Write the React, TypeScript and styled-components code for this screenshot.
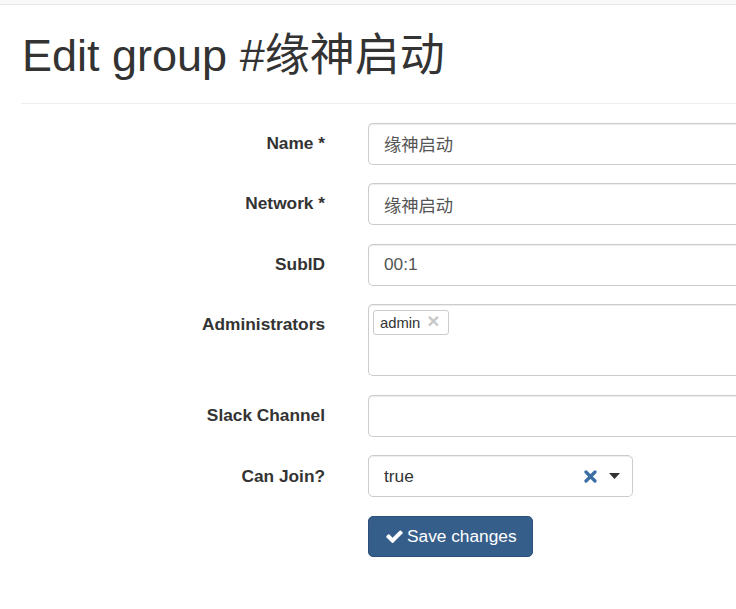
import React from "react";
import styled, { createGlobalStyle } from "styled-components";

const Global = createGlobalStyle`
  html, body { margin: 0; padding: 0; background: #fff; overflow: hidden; }
  body {
    font-family: "Liberation Sans", Arial, "Noto Sans CJK SC", sans-serif;
    font-size: 17.3px;
    color: #333;
  }
  * { box-sizing: border-box; }
`;

const TopBar = styled.div`
  height: 5px;
  background: #f8f8f8;
  border-bottom: 1px solid #e7e7e7;
`;

const Container = styled.div`
  width: 100%;
  padding-left: 21px;
`;

const PageHeader = styled.div`
  margin-top: 26px;
  padding-bottom: 10px;
  border-bottom: 1px solid #eee;
  margin-bottom: 19px;
`;

const Title = styled.h1`
  margin: 0 0 12px 0;
  padding-left: 1px;
  font-size: 45px;
  font-weight: 400;
  line-height: 1.1;
  color: #333;
  font-family: "Liberation Sans", Arial, "Noto Sans CJK SC", sans-serif;
`;

const Form = styled.form`
  display: grid;
  grid-template-columns: 304px 1fr;
  column-gap: 43px;
  row-gap: 18.6px;
  align-items: start;
`;

const Label = styled.label`
  text-align: right;
  font-weight: 700;
  padding-top: 8.2px;
  line-height: 24.7px;
  font-size: 17.3px;
  color: #333;
`;

const Input = styled.div<{ $width?: number }>`
  height: 42px;
  width: ${(p) => (p.$width ? `${p.$width}px` : "100%")};
  border: 1px solid #ccc;
  border-right: ${(p) => (p.$width ? "1px solid #ccc" : "none")};
  border-radius: ${(p) => (p.$width ? "5px" : "5px 0 0 5px")};
  box-shadow: inset 0 1px 1px rgba(0, 0, 0, 0.075);
  background: #fff;
  padding: 0 15px;
  display: flex;
  align-items: center;
  font-size: 17.3px;
  color: #555;
  font-family: "Liberation Sans", Arial, "Noto Sans CJK SC", sans-serif;
`;

const TagBox = styled.div`
  height: 72px;
  border: 1px solid #ccc;
  border-right: none;
  border-radius: 5px 0 0 5px;
  box-shadow: inset 0 1px 1px rgba(0, 0, 0, 0.075);
  padding: 5px 4px;
  display: flex;
  align-items: flex-start;
`;

const Tag = styled.span`
  display: inline-flex;
  align-items: center;
  height: 25px;
  border: 1px solid #ccc;
  border-radius: 3px;
  padding: 0 8px 0 6px;
  font-size: 14.8px;
  color: #333;
  gap: 7px;
`;

const TagX = styled.span`
  color: #c8c8c8;
  font-size: 21px;
  font-weight: 700;
  line-height: 1;
  margin-top: -4px;
`;

const SelectValue = styled.span`
  flex: 1;
  color: #333;
`;

const Controls = styled.span`
  display: flex;
  align-items: center;
  gap: 12px;
  margin-right: -3px;
`;

const Button = styled.button`
  display: inline-flex;
  align-items: center;
  gap: 4px;
  height: 40.5px;
  padding: 0 15px 0 17px;
  background: #365e8b;
  border: 1px solid #2e5078;
  border-radius: 5px;
  color: #fff;
  font-size: 17.3px;
  font-family: "Liberation Sans", Arial, sans-serif;
`;

const Spacer = styled.div``;

const Check = () => (
  <svg width="17" height="15" viewBox="100 330 1590 1150" fill="#fff">
    <path d="M1671 566q0 40-28 68l-724 724-136 136q-28 28-68 28t-68-28l-136-136-362-362q-28-28-28-68t28-68l136-136q28-28 68-28t68 28l294 295 656-657q28-28 68-28t68 28l136 136q28 28 28 68z" />
  </svg>
);

const Clear = () => (
  <svg width="13" height="13" viewBox="0 0 13 13">
    <path d="M2 2 L11 11 M11 2 L2 11" stroke="#3b6ea3" strokeWidth="3.2" strokeLinecap="round" />
  </svg>
);

const Caret = () => (
  <svg width="11" height="6" viewBox="0 0 11 6">
    <path d="M0 0 H11 L5.5 6 Z" fill="#333" />
  </svg>
);

export default function App() {
  return (
    <>
      <Global />
      <TopBar />
      <Container>
        <PageHeader>
          <Title>Edit group #缘神启动</Title>
        </PageHeader>
        <Form>
          <Label>Name *</Label>
          <Input>缘神启动</Input>

          <Label>Network *</Label>
          <Input>缘神启动</Input>

          <Label>SubID</Label>
          <Input>00:1</Input>

          <Label>Administrators</Label>
          <TagBox>
            <Tag>
              admin <TagX>×</TagX>
            </Tag>
          </TagBox>

          <Label>Slack Channel</Label>
          <Input />

          <Label>Can Join?</Label>
          <Input $width={265}>
            <SelectValue>true</SelectValue>
            <Controls>
              <Clear />
              <Caret />
            </Controls>
          </Input>

          <Spacer />
          <div>
            <Button type="button">
              <Check />
              Save changes
            </Button>
          </div>
        </Form>
      </Container>
    </>
  );
}
